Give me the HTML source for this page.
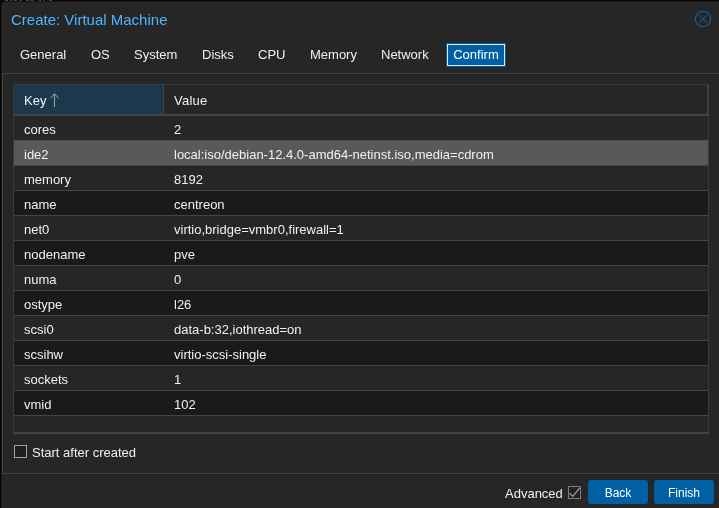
<!DOCTYPE html>
<html><head><meta charset="utf-8">
<style>
html,body{margin:0;padding:0;}
body{width:719px;height:508px;overflow:hidden;background:#080808;position:relative;font-family:"Liberation Sans",Arial,sans-serif;color:#f0f0f0;}
#win{position:absolute;left:2px;top:2px;width:730px;height:520px;background:#262626;border-radius:3px 0 0 0;box-shadow:0 0 0 1px #171717;}
#title{position:absolute;left:11px;top:11px;font-size:15px;line-height:18px;color:#4db5ff;white-space:nowrap;}
#close{position:absolute;left:693px;top:9px;width:20px;height:20px;}
.tab{position:absolute;top:43px;height:24px;line-height:23px;font-size:13px;color:#f0f0f0;white-space:nowrap;}
.tab.active{background:#0060a4;box-sizing:border-box;left:446px;width:60px;text-align:center;color:#fff;}
.tab.active:after{content:"";position:absolute;left:1px;top:1px;right:1px;bottom:1px;border:1px solid #dce9f5;}
#panel{position:absolute;left:2px;top:73px;width:730px;height:401px;border-top:1px solid #444;border-left:1px solid #444;border-bottom:1px solid #444;box-sizing:border-box;}
#grid{position:absolute;left:13px;top:84px;width:696px;height:350px;border:1px solid #3a3a3a;border-bottom:2px solid #424242;box-sizing:border-box;background:#262626;}
#hdr{position:absolute;left:0;top:0;width:693px;height:29px;border-bottom:1px solid #444;border-right:1px solid #444;}
#hkey{position:absolute;left:0;top:0;width:149px;height:29px;background:#1c384c;border-right:1px solid #444;}
.ht{position:absolute;top:1px;line-height:30px;font-size:13px;white-space:nowrap;}
.row{position:absolute;left:0;width:694px;height:24px;border-top:1px solid #444;font-size:13px;line-height:25px;}
.row.alt{background:#1a1a1a;}
.row.sel{background:#595959;border-top-color:#4c4c4c;}
.row span{position:absolute;top:1px;white-space:nowrap;}
.k{left:10px;}
.v{left:160px;}
#cb1{position:absolute;left:14px;top:445px;width:11px;height:11px;border:1px solid #a2a2a2;background:#1f1f1f;}
#cb1l{position:absolute;left:32px;top:444px;font-size:13px;line-height:18px;white-space:nowrap;}
#adv{position:absolute;left:505px;top:485px;font-size:13px;line-height:18px;white-space:nowrap;}
#cb2{position:absolute;left:568px;top:486px;width:13px;height:13px;}
.btn{position:absolute;top:480px;height:24px;line-height:27px;font-size:12px;background:#0060a4;color:#fff;text-align:center;border-radius:3px;width:60px;}
</style></head><body>
<div style="position:absolute;left:0;top:0;width:60px;height:1px;background:repeating-linear-gradient(90deg,#080808 0 5px,#454545 5px 8px,#080808 8px 10px,#3a3a3a 10px 13px,#080808 13px 14px,#454545 14px 17px,#080808 17px 19px,#3a3a3a 19px 22px,#080808 22px 26px,#454545 26px 29px,#080808 29px 30px,#3a3a3a 30px 34px,#080808 34px 39px,#454545 39px 41px,#080808 41px 43px,#3a3a3a 43px 45px,#080808 45px 49px,#454545 49px 52px,#080808 52px 60px)"></div>
<div id="win"></div>
<div id="txt" style="position:absolute;left:0;top:0;width:719px;height:508px;will-change:transform;">
<div id="title">Create: Virtual Machine</div>
<svg id="close" viewBox="0 0 20 20"><circle cx="10" cy="10" r="7.7" fill="none" stroke="#0e659f" stroke-width="1.1"/><path d="M6 6 L14 14 M14 6 L6 14" stroke="#155d96" stroke-width="1" fill="none"/></svg>
<div class="tab" style="left:20px">General</div>
<div class="tab" style="left:91px">OS</div>
<div class="tab" style="left:134px">System</div>
<div class="tab" style="left:202px">Disks</div>
<div class="tab" style="left:258px">CPU</div>
<div class="tab" style="left:310px">Memory</div>
<div class="tab" style="left:381px">Network</div>
<div class="tab active">Confirm</div>
<div id="panel"></div>
<div id="grid">
 <div id="hdr"><div id="hkey"></div><div class="ht" style="left:10px">Key</div><svg style="position:absolute;left:35px;top:8px" width="11" height="15" viewBox="0 0 11 15"><path d="M5.5 0.8 V14 M1.4 5.3 L5.5 0.8 L9.6 5.3" stroke="#a6a6a6" stroke-width="1" fill="none"/></svg><div class="ht" style="left:160px;letter-spacing:0.25px">Value</div></div>
 <div class="row" style="top:30px"><span class="k">cores</span><span class="v">2</span></div>
 <div class="row sel" style="top:55px"><span class="k">ide2</span><span class="v">local:iso/debian-12.4.0-amd64-netinst.iso,media=cdrom</span></div>
 <div class="row" style="top:80px"><span class="k">memory</span><span class="v">8192</span></div>
 <div class="row alt" style="top:105px"><span class="k">name</span><span class="v">centreon</span></div>
 <div class="row" style="top:130px"><span class="k">net0</span><span class="v">virtio,bridge=vmbr0,firewall=1</span></div>
 <div class="row alt" style="top:155px"><span class="k">nodename</span><span class="v">pve</span></div>
 <div class="row" style="top:180px"><span class="k">numa</span><span class="v">0</span></div>
 <div class="row alt" style="top:205px"><span class="k">ostype</span><span class="v">l26</span></div>
 <div class="row" style="top:230px"><span class="k">scsi0</span><span class="v">data-b:32,iothread=on</span></div>
 <div class="row alt" style="top:255px"><span class="k">scsihw</span><span class="v">virtio-scsi-single</span></div>
 <div class="row" style="top:280px"><span class="k">sockets</span><span class="v">1</span></div>
 <div class="row alt" style="top:305px"><span class="k">vmid</span><span class="v">102</span></div>
 <div class="row" style="top:330px;height:0"></div>
</div>
<div id="cb1"></div><div id="cb1l">Start after created</div>
<div id="adv">Advanced</div>
<svg id="cb2" viewBox="0 0 13 13"><rect x="0.5" y="0.5" width="12" height="12" fill="#222" stroke="#7d7d7d" stroke-width="1"/><path d="M1.6 7.2 L4.8 10.3 L11.6 2" stroke="#9a9a9a" stroke-width="1.2" fill="none"/></svg>
<div class="btn" style="left:588px">Back</div>
<div class="btn" style="left:654px">Finish</div>
</div>
</body></html>
